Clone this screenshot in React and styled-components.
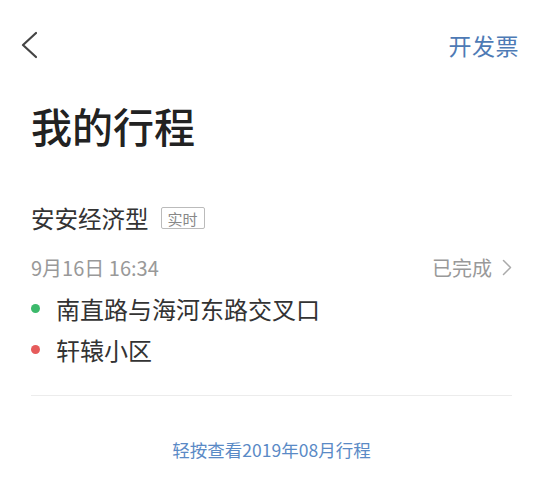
import React from 'react'
import styled, { createGlobalStyle } from 'styled-components'

const GlobalStyle = createGlobalStyle`
  body {
    margin: 0;
    background: #fff;
    font-family: "Noto Sans CJK SC", "Noto Sans", sans-serif;
  }
`

const Page = styled.div`
  width: 540px;
  height: 500px;
  background: #fff;
  overflow: hidden;
`

const Header = styled.div`
  display: flex;
  align-items: center;
  justify-content: space-between;
  height: 30px;
  padding: 30px 21px 0 21px;
`

const BackButton = styled.div`
  display: flex;
  align-items: center;
  width: 18px;
  height: 30px;
`

const HeaderAction = styled.div`
  font-size: 23px;
  line-height: 30px;
  color: #4d7ab5;
  letter-spacing: 0.5px;
`

const Content = styled.div`
  padding: 0 28px 0 31px;
`

const Title = styled.h1`
  margin: 45px 0 0 0;
  font-size: 41px;
  line-height: 41px;
  font-weight: 500;
  color: #222;
`

const CarRow = styled.div`
  display: flex;
  align-items: center;
  gap: 12px;
  margin-top: 57px;
  height: 30px;
`

const CarType = styled.span`
  font-size: 23.5px;
  line-height: 30px;
  color: #333;
`

const Badge = styled.span`
  display: inline-flex;
  align-items: center;
  height: 20px;
  padding: 0 6px;
  border: 1px solid #bbb;
  border-radius: 2px;
  font-size: 15px;
  color: #888;
`

const DateRow = styled.div`
  display: flex;
  align-items: center;
  justify-content: space-between;
  margin-top: 21px;
  height: 26px;
  font-size: 20px;
  color: #999;
`

const Status = styled.div`
  display: flex;
  align-items: center;
  gap: 10px;
`

const AddressList = styled.div`
  margin-top: 8px;
`

const Address = styled.div`
  display: flex;
  align-items: center;
  gap: 16px;
  height: 41px;
  font-size: 24px;
  color: #333;
`

const Dot = styled.span`
  width: 9px;
  height: 9px;
  border-radius: 50%;
  background: ${(p) => p.$color};
  flex-shrink: 0;
`

const Divider = styled.div`
  margin-top: 25px;
  height: 1px;
  background: #ececec;
`

const MoreLink = styled.div`
  margin-top: 42px;
  text-align: center;
  font-size: 17.5px;
  line-height: 24px;
  color: #5a8ac6;
`

const App = () => {
  return (
    <Page>
      <GlobalStyle />
      <Header>
        <BackButton>
          <svg width="16" height="28" viewBox="0 0 16 28">
            <path d="M15 2 L2 14 L15 26" fill="none" stroke="#444" strokeWidth="2.2" strokeLinecap="round" strokeLinejoin="round" />
          </svg>
        </BackButton>
        <HeaderAction>开发票</HeaderAction>
      </Header>
      <Content>
        <Title>我的行程</Title>
        <CarRow>
          <CarType>安安经济型</CarType>
          <Badge>实时</Badge>
        </CarRow>
        <DateRow>
          <span>9月16日 16:34</span>
          <Status>
            <span>已完成</span>
            <svg width="10" height="17" viewBox="0 0 10 17">
              <path d="M1.5 1.5 L8.5 8.5 L1.5 15.5" fill="none" stroke="#aaa" strokeWidth="1.5" strokeLinecap="round" strokeLinejoin="round" />
            </svg>
          </Status>
        </DateRow>
        <AddressList>
          <Address>
            <Dot $color="#3cb96b" />
            南直路与海河东路交叉口
          </Address>
          <Address>
            <Dot $color="#e65b5b" />
            轩辕小区
          </Address>
        </AddressList>
        <Divider />
        <MoreLink>轻按查看2019年08月行程</MoreLink>
      </Content>
    </Page>
  )
}

export default App
